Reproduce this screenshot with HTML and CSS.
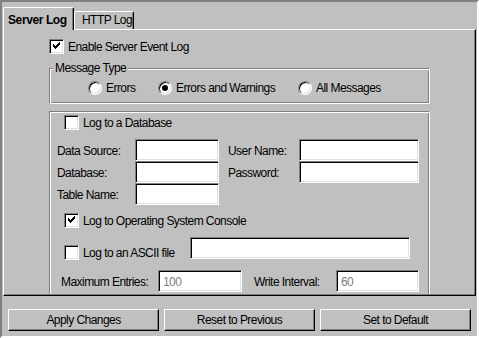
FILE: index.html
```html
<!DOCTYPE html>
<html>
	<head>
		<meta charset="utf-8">
		<title>Server Log</title>
		<link rel="stylesheet" href="styles.css">
	</head>
	<body>
		<div class="frame">
			<div class="tabs">
				<div class="tab tab-active">Server Log</div>
				<div class="tab">HTTP Log</div>
			</div>
			<div class="panel">
				<div class="check check-top">
					<span class="box"><svg width="7" height="7" viewBox="0 0 7 7"><path d="M6 0h1v1h-1zM5 1h2v1h-2zM0 2h1v1h-1zM4 2h3v1h-3zM0 3h2v1h-2zM3 3h3v1h-3zM0 4h5v1h-5zM1 5h3v1h-3zM2 6h1v1h-1z"/></svg></span>
					Enable Server Event Log
				</div>
				<div class="group group-type">
					<span class="legend">Message Type</span>
					<div class="radios">
						<div class="radio radio-1"><span class="dot"></span>Errors</div>
						<div class="radio radio-2"><span class="dot on"></span>Errors and Warnings</div>
						<div class="radio"><span class="dot"></span>All Messages</div>
					</div>
				</div>
				<div class="group group-log">
					<div class="check check-db"><span class="box"></span>Log to a Database</div>
					<div class="db-grid">
						<span class="lbl">Data Source:</span><div class="field f-short"></div>
						<span class="lbl">User Name:</span><div class="field f-user"></div>
						<span class="lbl">Database:</span><div class="field f-short"></div>
						<span class="lbl">Password:</span><div class="field f-user"></div>
						<span class="lbl">Table Name:</span><div class="field f-short"></div>
					</div>
					<div class="check check-console">
						<span class="box"><svg width="7" height="7" viewBox="0 0 7 7"><path d="M6 0h1v1h-1zM5 1h2v1h-2zM0 2h1v1h-1zM4 2h3v1h-3zM0 3h2v1h-2zM3 3h3v1h-3zM0 4h5v1h-5zM1 5h3v1h-3zM2 6h1v1h-1z"/></svg></span>
						Log to Operating System Console
					</div>
					<div class="ascii-row">
						<div class="check check-ascii"><span class="box"></span>Log to an ASCII file</div>
						<div class="field f-file"></div>
					</div>
					<div class="limits">
						<span class="lbl lbl-max">Maximum Entries:</span>
						<div class="field f-max">100</div>
						<span class="lbl lbl-write">Write Interval:</span>
						<div class="field f-write">60</div>
					</div>
				</div>
			</div>
			<div class="buttons">
				<div class="btn">Apply Changes</div>
				<div class="btn">Reset to Previous</div>
				<div class="btn">Set to Default</div>
			</div>
		</div>
	</body>
</html>
```

FILE: styles.css
```css
* {
	margin: 0;
	padding: 0;
	box-sizing: border-box;
}

body {
	width: 479px;
	height: 338px;
	overflow: hidden;
	background: #c0c0c0;
	color: #000;
	font-family: 'Liberation Sans', Arial, sans-serif;
	font-size: 12px;
	letter-spacing: -0.55px;
	line-height: 14px;
}

.frame {
	width: 479px;
	height: 338px;
	border: 2px solid;
	border-color: #808080 #fff #fff #808080;
	display: flex;
	flex-direction: column;
}

/* tabs */

.tabs {
	height: 27px;
	display: flex;
	align-items: flex-end;
	padding-left: 1px;
	position: relative;
	z-index: 2;
}

.tab {
	width: 60px;
	height: 18px;
	display: flex;
	align-items: flex-end;
	padding: 0 0 2px 7px;
	border-top: 1px solid #fff;
	border-left: 1px solid #fff;
	border-right: 1px solid #000;
	border-radius: 2px 2px 0 0;
	box-shadow: inset -1px 0 #808080;
	white-space: nowrap;
}

.tab-active {
	width: 71px;
	height: 23px;
	margin-bottom: -1px;
	padding: 0 0 3px 4px;
	font-weight: bold;
	letter-spacing: -0.4px;
	background: #c0c0c0;
}

/* panel */

.panel {
	height: 267px;
	margin: 0 1px;
	padding-top: 9px;
	border: 1px solid;
	border-color: #fff #000 #000 #fff;
	box-shadow: inset -1px -1px #808080;
	overflow: hidden;
}

.check {
	display: flex;
	align-items: center;
	height: 15px;
	white-space: nowrap;
}

.box {
	width: 15px;
	height: 15px;
	margin-right: 4px;
	padding: 2px 0 0 3px;
	background: #fff;
	border: 1px solid;
	border-color: #808080 #fff #fff #808080;
	box-shadow: inset 1px 1px #000, inset -1px -1px #dfdfdf;
	flex-shrink: 0;
}

.box svg {
	display: block;
	shape-rendering: crispEdges;
}

.check-top {
	margin-left: 45px;
}

.group {
	position: relative;
	width: 381px;
	margin-left: 45px;
	border: 1px solid;
	border-color: #808080 #fff #fff #808080;
	box-shadow: inset 1px 1px #fff, inset -1px -1px #808080;
}

.group-type {
	height: 36px;
	margin-top: 14px;
}

.legend {
	position: absolute;
	top: -8px;
	left: 3px;
	padding: 0 2px;
	background: #c0c0c0;
}

.radios {
	display: flex;
	align-items: center;
	height: 14px;
	margin: 12px 0 0 38px;
}

.radio {
	display: flex;
	align-items: center;
	white-space: nowrap;
}

.radio-1 {
	width: 70px;
}

.radio-2 {
	width: 140px;
}

.dot {
	width: 14px;
	height: 14px;
	margin-right: 4px;
	border-radius: 50%;
	background: #fff;
	border: 1px solid;
	border-color: #808080 #fff #fff #808080;
	box-shadow: inset 1px 1px #000, inset -1px -1px #dfdfdf;
	display: flex;
	align-items: center;
	justify-content: center;
}

.dot.on::after {
	content: '';
	width: 6px;
	height: 6px;
	border-radius: 50%;
	background: #000;
}

.group-log {
	height: 183px;
	margin-top: 7px;
	border-bottom: none;
	box-shadow: inset 1px 1px #fff, inset -1px 0 #808080;
}

.check-db {
	margin: 3px 0 0 14px;
}

.db-grid {
	display: grid;
	grid-template-columns: 78px 93px 71px 120px;
	grid-auto-rows: 22px;
	margin-top: 9px;
	padding-left: 7px;
}

.lbl {
	align-self: center;
	padding-top: 1px;
	white-space: nowrap;
}

.field {
	height: 22px;
	padding: 4px 0 0 4px;
	background: #fff;
	color: #808080;
	border: 1px solid;
	border-color: #808080 #fff #fff #808080;
	box-shadow: inset 1px 1px #000, inset -1px -1px #dfdfdf;
}

.f-short {
	width: 84px;
}

.f-user {
	width: 120px;
}

.check-console {
	margin: 8px 0 0 14px;
}

.ascii-row {
	display: flex;
	margin: 9px 0 0 14px;
}

.check-ascii {
	width: 126px;
	margin-top: 8px;
}

.f-file {
	width: 220px;
}

.limits {
	display: flex;
	align-items: center;
	margin: 10px 0 0 11px;
}

.lbl-max {
	width: 97px;
}

.f-max {
	width: 84px;
}

.lbl-write {
	width: 82px;
	margin-left: 12px;
}

.f-write {
	width: 83px;
}

/* buttons */

.buttons {
	display: flex;
	gap: 5px;
	padding: 13px 0 0 6px;
}

.btn {
	width: 151px;
	height: 22px;
	display: flex;
	align-items: center;
	justify-content: center;
	border: 1px solid;
	border-color: #fff #000 #000 #fff;
	box-shadow: inset -1px -1px #808080;
	white-space: nowrap;
}
```
